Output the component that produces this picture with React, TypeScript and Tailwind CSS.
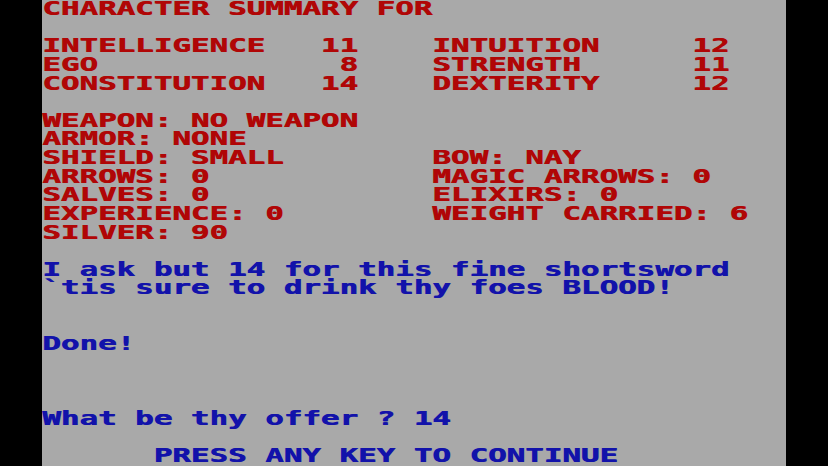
import React from "react";

type Line = { text: string; color?: "red" | "blue" };

// 40x25 text screen; blank rows are empty strings
const screen: Line[] = [
  { text: "CHARACTER SUMMARY FOR", color: "red" },
  { text: "" },
  { text: "INTELLIGENCE   11    INTUITION     12", color: "red" },
  { text: "EGO             8    STRENGTH      11", color: "red" },
  { text: "CONSTITUTION   14    DEXTERITY     12", color: "red" },
  { text: "" },
  { text: "WEAPON: NO WEAPON", color: "red" },
  { text: "ARMOR: NONE", color: "red" },
  { text: "SHIELD: SMALL        BOW: NAY", color: "red" },
  { text: "ARROWS: 0            MAGIC ARROWS: 0", color: "red" },
  { text: "SALVES: 0            ELIXIRS: 0", color: "red" },
  { text: "EXPERIENCE: 0        WEIGHT CARRIED: 6", color: "red" },
  { text: "SILVER: 90", color: "red" },
  { text: "" },
  { text: "I ask but 14 for this fine shortsword", color: "blue" },
  { text: "`tis sure to drink thy foes BLOOD!", color: "blue" },
  { text: "" },
  { text: "" },
  { text: "Done!", color: "blue" },
  { text: "" },
  { text: "" },
  { text: "" },
  { text: "What be thy offer ? 14", color: "blue" },
  { text: "" },
  { text: "      PRESS ANY KEY TO CONTINUE", color: "blue" },
];

const ScreenRow: React.FC<{ line: Line }> = ({ line }) => (
  <div className="h-[18.64px] leading-[18.64px] overflow-visible">
    <span
      className={
        "inline-block whitespace-pre origin-left scale-x-[1.6078] [text-shadow:0.6px_0_0_currentColor] " +
        (line.color === "blue" ? "text-[#1212aa]" : "text-[#b00606]")
      }
    >
      {line.text}
    </span>
  </div>
);

const App: React.FC = () => {
  return (
    <div className="w-[828px] h-[466px] bg-black flex justify-center overflow-hidden">
      <div
        className="w-[744px] h-[466px] bg-[#a9a9a9] font-bold text-[19.2px]"
        style={{ fontFamily: '"DejaVu Sans Mono", monospace' }}
      >
        {screen.map((line, i) => (
          <ScreenRow key={i} line={line} />
        ))}
      </div>
    </div>
  );
};

export default App;
